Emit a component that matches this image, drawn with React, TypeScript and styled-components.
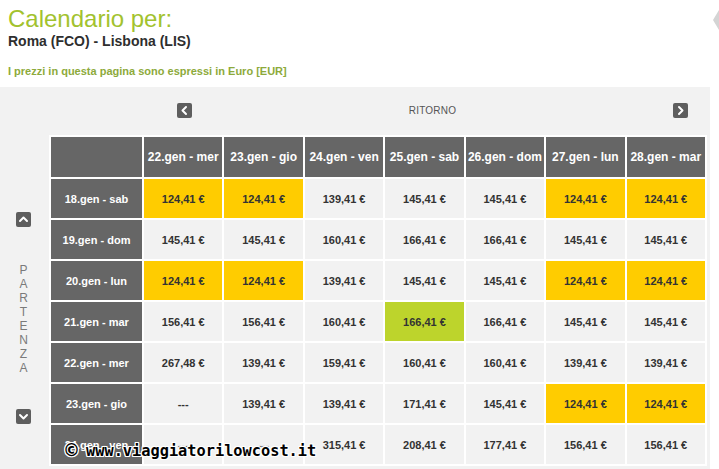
import React from "react";
import styled, { createGlobalStyle } from "styled-components";

const Global = createGlobalStyle`
  html, body { margin: 0; padding: 0; background: #ffffff; }
  body { font-family: "Liberation Sans", Arial, sans-serif; }
`;

const Page = styled.div`
  position: relative;
  width: 719px;
  height: 469px;
  overflow: hidden;
`;

const Header = styled.header`
  display: flex;
  justify-content: space-between;
  align-items: flex-start;
  padding: 5px 0 0 8px;
`;

const HeadText = styled.div`
  display: flex;
  flex-direction: column;
`;

const Title = styled.h1`
  margin: 0;
  font-size: 24px;
  line-height: 28px;
  font-weight: normal;
  color: #a2c22e;
`;

const Route = styled.div`
  font-size: 14px;
  line-height: 17px;
  font-weight: bold;
  color: #2e2e2e;
`;

const Notice = styled.div`
  margin-top: 15px;
  font-size: 11px;
  line-height: 13px;
  font-weight: bold;
  color: #8daa3b;
`;

const EdgeMark = styled.svg`
  margin-top: 5px;
  display: block;
`;

const Panel = styled.section`
  margin-top: 9px;
  width: 710px;
  height: 400px;
  background: #f2f2f2;
  padding-top: 16px;
  box-sizing: border-box;
`;

const NavRow = styled.div`
  margin-left: 177px;
  width: 511px;
  height: 15px;
  display: flex;
  justify-content: space-between;
  align-items: center;
`;

const NavLabel = styled.span`
  font-size: 10px;
  color: #555555;
  letter-spacing: 0.2px;
`;

const ArrowBtn = styled.button`
  width: 15px;
  height: 15px;
  padding: 0;
  border: none;
  border-radius: 2px;
  background: #5e5e5e;
  display: flex;
  align-items: center;
  justify-content: center;
  cursor: pointer;
`;

const Body = styled.div`
  display: flex;
  margin-top: 17px;
`;

const Side = styled.div`
  width: 47px;
  display: flex;
  flex-direction: column;
  align-items: center;
  padding-top: 77px;
`;

const Letters = styled.div`
  margin: 36px 0 34px;
  display: flex;
  flex-direction: column;
  align-items: center;
  font-size: 12px;
  line-height: 14px;
  color: #7a7a7a;
`;

const Grid = styled.div`
  margin-left: 2px;
  width: 658px;
  box-sizing: border-box;
  padding: 2px;
  background: #ffffff;
  display: grid;
  grid-template-columns: 91px repeat(7, 1fr);
  grid-template-rows: 40px repeat(7, 39px);
  gap: 2px;
`;

const HeadCell = styled.div<{ $col?: boolean }>`
  background: #666666;
  color: #ffffff;
  font-weight: bold;
  font-size: ${(p) => (p.$col ? "12px" : "11px")};
  display: flex;
  align-items: center;
  justify-content: center;
  white-space: nowrap;
`;

type Tone = "plain" | "low" | "best";

const toneBg: Record<Tone, string> = {
  plain: "#f2f2f2",
  low: "#ffcc00",
  best: "#bdd42c",
};

const PriceCell = styled.div<{ $tone: Tone }>`
  background: ${(p) => toneBg[p.$tone]};
  color: #333333;
  font-weight: bold;
  font-size: 11px;
  display: flex;
  align-items: center;
  justify-content: center;
  white-space: nowrap;
`;

const Watermark = styled.div`
  position: absolute;
  left: 63px;
  top: 441px;
  display: flex;
  align-items: baseline;
  font-family: "DejaVu Sans Mono", monospace;
  font-weight: bold;
  font-size: 15.3px;
  line-height: 18px;
  color: #000000;
  text-shadow: 1px 0 0 #fff, -1px 0 0 #fff, 0 1px 0 #fff, 0 -1px 0 #fff,
    1px 1px 0 #fff, -1px -1px 0 #fff, 1px -1px 0 #fff, -1px 1px 0 #fff;
`;

const Copy = styled.span`
  font-family: "DejaVu Sans", sans-serif;
  font-size: 17px;
  margin-right: 6px;
`;

const Chevron = ({ dir }: { dir: "left" | "right" | "up" | "down" }) => {
  const pts: Record<string, string> = {
    left: "9,4 5.5,7.5 9,11",
    right: "6,4 9.5,7.5 6,11",
    up: "4,9 7.5,5.5 11,9",
    down: "4,6 7.5,9.5 11,6",
  };
  return (
    <svg width="15" height="15" viewBox="0 0 15 15">
      <polyline
        points={pts[dir]}
        fill="none"
        stroke="#ffffff"
        strokeWidth="2"
        strokeLinecap="round"
        strokeLinejoin="round"
      />
    </svg>
  );
};

const cols = [
  "22.gen - mer",
  "23.gen - gio",
  "24.gen - ven",
  "25.gen - sab",
  "26.gen - dom",
  "27.gen - lun",
  "28.gen - mar",
];

type Cell = { v: string; t: Tone };
const c = (v: string, t: Tone = "plain"): Cell => ({ v: v === "---" ? v : v + " €", t });

const rows: { label: string; cells: Cell[] }[] = [
  {
    label: "18.gen - sab",
    cells: [c("124,41", "low"), c("124,41", "low"), c("139,41"), c("145,41"), c("145,41"), c("124,41", "low"), c("124,41", "low")],
  },
  {
    label: "19.gen - dom",
    cells: [c("145,41"), c("145,41"), c("160,41"), c("166,41"), c("166,41"), c("145,41"), c("145,41")],
  },
  {
    label: "20.gen - lun",
    cells: [c("124,41", "low"), c("124,41", "low"), c("139,41"), c("145,41"), c("145,41"), c("124,41", "low"), c("124,41", "low")],
  },
  {
    label: "21.gen - mar",
    cells: [c("156,41"), c("156,41"), c("160,41"), c("166,41", "best"), c("166,41"), c("145,41"), c("145,41")],
  },
  {
    label: "22.gen - mer",
    cells: [c("267,48"), c("139,41"), c("159,41"), c("160,41"), c("160,41"), c("139,41"), c("139,41")],
  },
  {
    label: "23.gen - gio",
    cells: [c("---"), c("139,41"), c("139,41"), c("171,41"), c("145,41"), c("124,41", "low"), c("124,41", "low")],
  },
  {
    label: "24.gen - ven",
    cells: [c("---"), c("---"), c("315,41"), c("208,41"), c("177,41"), c("156,41"), c("156,41")],
  },
];

export default function App() {
  return (
    <Page>
      <Global />
      <Header>
        <HeadText>
          <Title>Calendario per:</Title>
          <Route>Roma (FCO) - Lisbona (LIS)</Route>
          <Notice>I prezzi in questa pagina sono espressi in Euro [EUR]</Notice>
        </HeadText>
        <EdgeMark width="6" height="20" viewBox="0 0 6 20">
          <polygon points="6,0 0,10 6,20" fill="#d4d4d4" />
        </EdgeMark>
      </Header>
      <Panel>
        <NavRow>
          <ArrowBtn aria-label="precedente">
            <Chevron dir="left" />
          </ArrowBtn>
          <NavLabel>RITORNO</NavLabel>
          <ArrowBtn aria-label="successivo">
            <Chevron dir="right" />
          </ArrowBtn>
        </NavRow>
        <Body>
          <Side>
            <ArrowBtn aria-label="su">
              <Chevron dir="up" />
            </ArrowBtn>
            <Letters>
              {"PARTENZA".split("").map((l, i) => (
                <span key={i}>{l}</span>
              ))}
            </Letters>
            <ArrowBtn aria-label="giù">
              <Chevron dir="down" />
            </ArrowBtn>
          </Side>
          <Grid>
            <HeadCell $col />
            {cols.map((h) => (
              <HeadCell $col key={h}>
                {h}
              </HeadCell>
            ))}
            {rows.map((r) => (
              <React.Fragment key={r.label}>
                <HeadCell>{r.label}</HeadCell>
                {r.cells.map((cell, i) => (
                  <PriceCell key={i} $tone={cell.t}>
                    {cell.v}
                  </PriceCell>
                ))}
              </React.Fragment>
            ))}
          </Grid>
        </Body>
      </Panel>
      <Watermark>
        <Copy>©</Copy>
        <span>www.viaggiatorilowcost.it</span>
      </Watermark>
    </Page>
  );
}
